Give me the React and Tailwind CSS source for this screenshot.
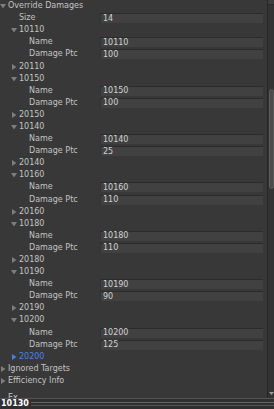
import React from 'react';

const rows = [
  { type: 'fold', label: 'Override Damages', depth: 0, open: true },
  { type: 'field', label: 'Size', depth: 1, value: '14' },
];

const groups = [
  ['10110', '20110', '100'],
  ['10150', '20150', '100'],
  ['10140', '20140', '25'],
  ['10160', '20160', '110'],
  ['10180', '20180', '110'],
  ['10190', '20190', '90'],
  ['10200', '20200', '125'],
];

groups.forEach(([id, next, ptc], i) => {
  rows.push({ type: 'fold', label: id, depth: 1, open: true });
  rows.push({ type: 'field', label: 'Name', depth: 2, value: id });
  rows.push({ type: 'field', label: 'Damage Ptc', depth: 2, value: ptc });
  rows.push({ type: 'fold', label: next, depth: 1, open: false, active: i === groups.length - 1 });
});

rows.push({ type: 'fold', label: 'Ignored Targets', depth: 0, open: false });
rows.push({ type: 'fold', label: 'Efficiency Info', depth: 0, open: false });
rows.push({ type: 'fold', label: 'Ex', depth: 0, open: false, hideArrow: true, gapTop: true });

const Arrow = ({ open, active }) => (
  <svg width="6" height="6" viewBox="0 0 6 6" className="shrink-0">
    {open ? (
      <path d="M0 1 L6 1 L3 5.5 Z" fill="#7d7d7d" />
    ) : (
      <path d="M1 0 L5.5 3 L1 6 Z" fill={active ? '#4d7ddb' : '#7d7d7d'} />
    )}
  </svg>
);

const Row = ({ row }) => {
  const indent = { 0: 'pl-0', 1: 'pl-[11px]', 2: 'pl-[29px]' }[row.depth];
  if (row.type === 'fold') {
    return (
      <div className={`h-[12.1px] flex items-center ${indent} ${row.gapTop ? 'mt-[5px]' : ''}`}>
        {row.hideArrow ? <span className="w-[6px]" /> : <Arrow open={row.open} active={row.active} />}
        <span className={`ml-[2px] ${row.active ? 'text-[#4f82e6]' : 'text-[#c4c4c4]'}`}>{row.label}</span>
      </div>
    );
  }
  const labelPad = row.depth === 1 ? 'pl-[19px]' : indent;
  return (
    <div className="h-[12.1px] flex items-center">
      <span className={`w-[100px] shrink-0 ${labelPad} text-[#c4c4c4]`}>{row.label}</span>
      <div className="h-[10px] w-[163px] bg-[#414141] border-t border-[#2b2b2b] border-l border-l-[#333333] flex items-center pl-[2px] text-[#d2d2d2]">
        {row.value}
      </div>
    </div>
  );
};

export default function App() {
  return (
    <div className="w-[274px] h-[409px] bg-[#383838] overflow-hidden flex flex-col text-[8px] leading-none" style={{ fontFamily: '"DejaVu Sans", sans-serif' }}>
      <div className="flex flex-1 min-h-0">
        <div className="flex-1 overflow-hidden">
          {rows.map((r, i) => (
            <Row key={i} row={r} />
          ))}
        </div>
        <div className="w-[7px] bg-[#333333] border-l border-[#262626] flex flex-col items-center">
          <div className="h-[5px] w-full bg-[#3e3e3e] border-b border-[#2a2a2a]" />
          <div className="mt-[84px] h-[100px] w-[5px] rounded-[3px] bg-[#4b4b4b] border border-[#5a5a5a]" />
          <div className="flex-1" />
          <svg width="5" height="5" viewBox="0 0 5 5" className="mb-[2px]">
            <path d="M0 1 L5 1 L2.5 4 Z" fill="#9a9a9a" />
          </svg>
        </div>
      </div>
      <div className="h-[11px] bg-[#2f2f2f] border-t border-[#555555] flex items-center">
        <span className="pl-[1px] pr-[2px] font-bold text-[8px] text-white">10130</span>
        <div className="flex-1 flex flex-col gap-[2px]">
          <div className="h-px bg-[#666666]" />
          <div className="h-px bg-[#555555]" />
        </div>
      </div>
    </div>
  );
}
